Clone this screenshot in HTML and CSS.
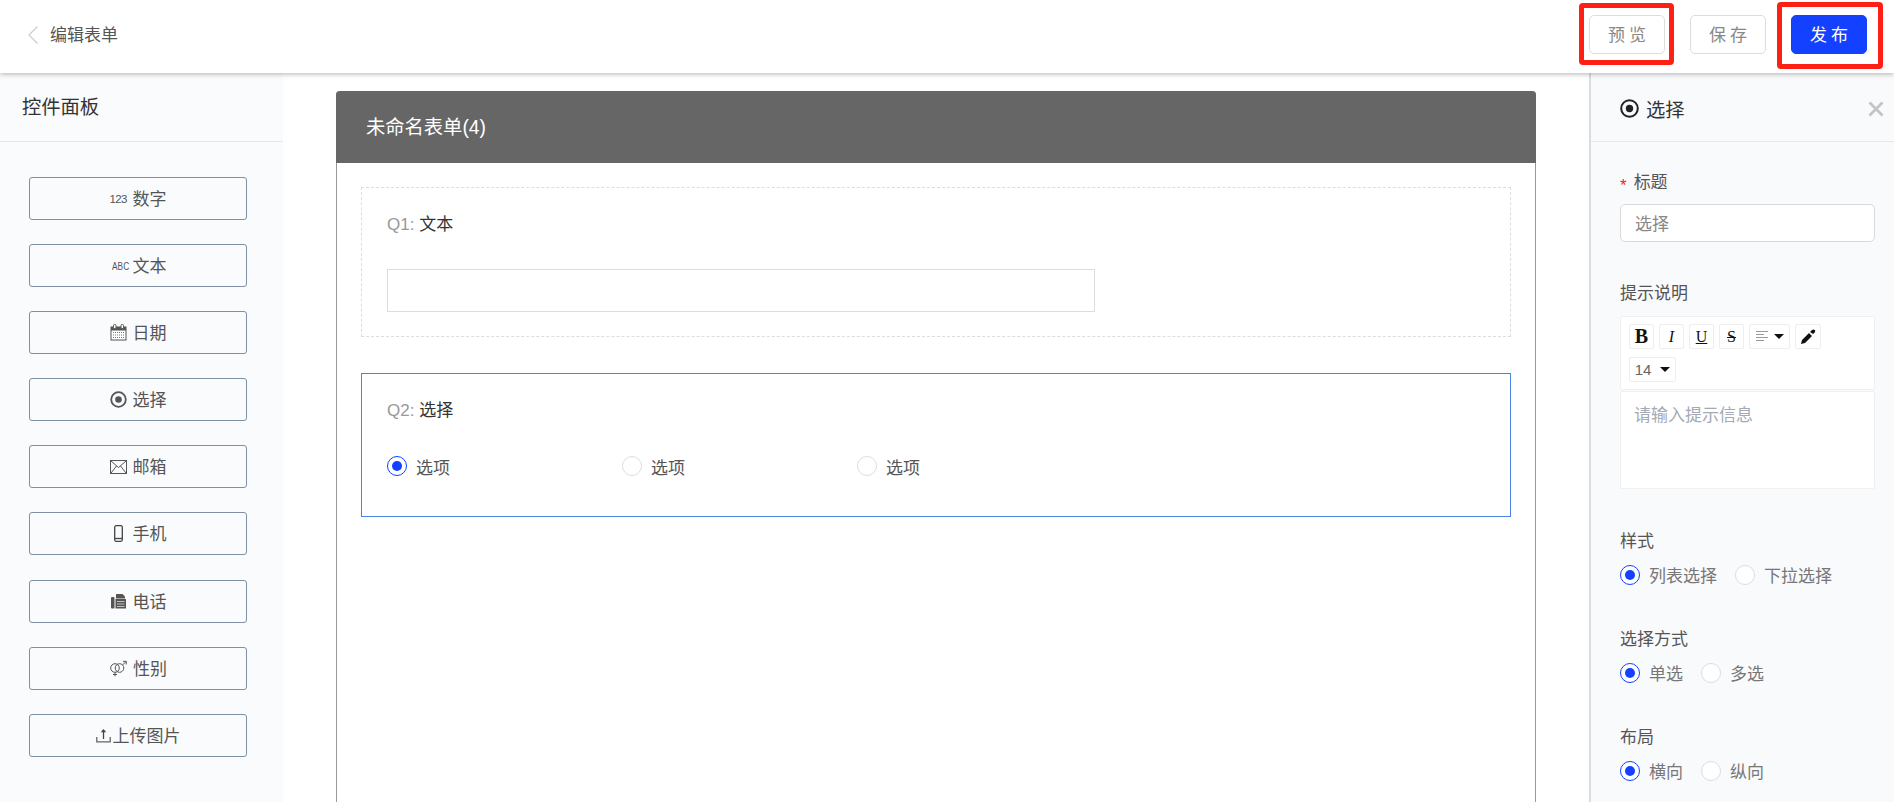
FILE: index.html
```html
<!DOCTYPE html>
<html lang="zh-CN">
<head>
<meta charset="utf-8">
<title>编辑表单</title>
<link rel="stylesheet" href="styles.css">
</head>
<body>
<header class="topbar">
  <div class="back">
    <svg class="back-icon" width="12" height="20" viewBox="0 0 12 20"><path d="M10.500 1.500 2 10l8.500 8.500" fill="none" stroke="#ccc" stroke-width="1.200"/></svg>
    <span>编辑表单</span>
  </div>
  <div class="actions">
    <button class="btn">预览</button>
    <button class="btn">保存</button>
    <button class="btn btn-primary">发布</button>
  </div>
  <div class="mark mark-a"></div>
  <div class="mark mark-b"></div>
</header>
<main class="workspace">
  <aside class="palette">
    <h2 class="panel-title">控件面板</h2>
    <div class="widget-list">
      <div class="widget"><span class="glyph glyph-num">123</span><span class="widget-name">数字</span></div>
      <div class="widget"><span class="glyph glyph-abc">ABC</span><span class="widget-name">文本</span></div>
      <div class="widget">
        <svg class="icon" width="17" height="17" viewBox="0 0 17 17"><rect x="1" y="3" width="15" height="13" fill="#fff" stroke="#555"/><rect x="1" y="3" width="15" height="3.500" fill="#555"/><rect x="3.500" y="0.500" width="2.500" height="4" rx="1" fill="#fff" stroke="#555"/><rect x="11" y="0.500" width="2.500" height="4" rx="1" fill="#fff" stroke="#555"/><path d="M3 8.500h11M3 11h11M3 13.500h11" stroke="#777" stroke-dasharray="1 1"/></svg>
        <span class="widget-name">日期</span>
      </div>
      <div class="widget">
        <svg class="icon" width="17" height="17" viewBox="0 0 17 17"><circle cx="8.500" cy="8.500" r="7.300" fill="none" stroke="#555" stroke-width="1.800"/><circle cx="8.500" cy="8.500" r="3.300" fill="#555"/></svg>
        <span class="widget-name">选择</span>
      </div>
      <div class="widget">
        <svg class="icon" width="17" height="14" viewBox="0 0 17 14"><rect x="0.500" y="0.500" width="16" height="13" fill="none" stroke="#555"/><path d="M1 1l7.500 6.500L16 1M1 13l5.500-7M16 13l-5.500-7" fill="none" stroke="#555"/></svg>
        <span class="widget-name">邮箱</span>
      </div>
      <div class="widget">
        <svg class="icon" width="17" height="17" viewBox="0 0 17 17"><rect x="4.700" y="0.700" width="7.600" height="15.600" rx="1.500" fill="none" stroke="#444" stroke-width="1.300"/><path d="M5 13.500h7" stroke="#444" stroke-width="1.300"/></svg>
        <span class="widget-name">手机</span>
      </div>
      <div class="widget">
        <svg class="icon" width="17" height="16" viewBox="0 0 17 16"><rect x="1" y="4" width="3.500" height="11.500" rx="1" fill="#555"/><path d="M6 1h6.500L15 3.500V5.500H6z" fill="#555"/><rect x="5.500" y="6" width="10.500" height="9.500" fill="#555"/><path d="M7 8.500h7.500M7 11h7.500M7 13.500h7.500" stroke="#ddd" stroke-width=".8"/></svg>
        <span class="widget-name">电话</span>
      </div>
      <div class="widget">
        <svg class="icon" width="18" height="17" viewBox="0 0 18 17"><circle cx="6" cy="8" r="4.300" fill="none" stroke="#555"/><circle cx="10.500" cy="8" r="4.300" fill="none" stroke="#555"/><path d="M6 12.300v4M4 14.500h4M13.500 5l3.500-3.500M14 1.300h3.200v3.200" fill="none" stroke="#555"/></svg>
        <span class="widget-name">性别</span>
      </div>
      <div class="widget widget-tight">
        <svg class="icon" width="15" height="15" viewBox="0 0 15 15"><path d="M.8 9v4.800h13.400V9" fill="none" stroke="#666" stroke-width="1.300"/><path d="M7.500 11V2" stroke="#444" stroke-width="1.300"/><path d="M4.800 4.200 7.500 1l2.700 3.200z" fill="#444"/></svg>
        <span class="widget-name">上传图片</span>
      </div>
    </div>
  </aside>

  <section class="canvas">
    <div class="form-card">
      <div class="form-head">未命名表单(4)</div>
      <div class="form-body">
        <div class="question">
          <div class="q-title"><span class="q-no">Q1:</span> 文本</div>
          <div class="text-field"></div>
        </div>
        <div class="question question-active">
          <div class="q-title"><span class="q-no">Q2:</span> 选择</div>
          <div class="option-row">
            <label class="option"><span class="radio radio-on"></span>选项</label>
            <label class="option"><span class="radio"></span>选项</label>
            <label class="option"><span class="radio"></span>选项</label>
          </div>
        </div>
      </div>
    </div>
  </section>

  <aside class="props">
    <div class="props-head">
      <svg width="19" height="19" viewBox="0 0 19 19"><circle cx="9.500" cy="9.500" r="8.300" fill="none" stroke="#222" stroke-width="2"/><circle cx="9.500" cy="9.500" r="3.700" fill="#222"/></svg>
      <span class="props-title">选择</span>
      <svg class="close" width="16" height="16" viewBox="0 0 16 16"><path d="M1.500 1.500l13 13M14.500 1.500l-13 13" stroke="#c4c4c4" stroke-width="2.800"/></svg>
    </div>
    <div class="props-body">
      <div class="field field-title">
        <div class="field-label"><span class="req">*</span>标题</div>
        <div class="prop-input">选择</div>
      </div>
      <div class="field field-hint">
        <div class="field-label">提示说明</div>
        <div class="editor">
          <div class="toolbar">
            <span class="tool tool-b">B</span>
            <span class="tool tool-i">I</span>
            <span class="tool tool-u">U</span>
            <span class="tool tool-s">S</span>
            <span class="tool tool-wide">
              <svg width="13" height="13" viewBox="0 0 13 13"><path d="M1 1.500h12M1 4.500h8M1 7.500h12M1 10.500h8" stroke="#999"/></svg>
              <i class="caret"></i>
            </span>
            <span class="tool tool-pen">
              <svg width="16" height="16" viewBox="0 0 16 16"><path d="M1 15l1-4 7-7 3 3-7 7zM10 3l2-2c1-.8 2-.8 2.700 0 .7.800.6 1.700 0 2.400L13 5z" fill="#111"/></svg>
            </span>
            <span class="tool tool-size">14<i class="caret"></i></span>
          </div>
          <div class="editor-body">请输入提示信息</div>
        </div>
      </div>
      <div class="field field-radio">
        <div class="field-label">样式</div>
        <div class="prop-radios">
          <label class="prop-option"><span class="radio radio-on"></span>列表选择</label>
          <label class="prop-option"><span class="radio"></span>下拉选择</label>
        </div>
      </div>
      <div class="field field-radio">
        <div class="field-label">选择方式</div>
        <div class="prop-radios">
          <label class="prop-option"><span class="radio radio-on"></span>单选</label>
          <label class="prop-option"><span class="radio"></span>多选</label>
        </div>
      </div>
      <div class="field field-radio">
        <div class="field-label">布局</div>
        <div class="prop-radios">
          <label class="prop-option"><span class="radio radio-on"></span>横向</label>
          <label class="prop-option"><span class="radio"></span>纵向</label>
        </div>
      </div>
    </div>
  </aside>
</main>
</body>
</html>
```

FILE: styles.css
```css
* { box-sizing: border-box; }
html, body { height: 100%; margin: 0; }
body {
  display: flex;
  flex-direction: column;
  height: 802px;
  overflow: hidden;
  background: #fff;
  color: #555;
  font-family: "Liberation Sans", "Noto Sans CJK SC", sans-serif;
  font-size: 17px;
}
.topbar {
  position: relative;
  z-index: 2;
  flex: 0 0 73px;
  display: flex;
  align-items: center;
  justify-content: space-between;
  padding: 0 27px 4px 27px;
  background: #fff;
  box-shadow: 0 1px 5px rgba(0, 0, 0, .3);
}
.back { display: flex; align-items: center; gap: 11px; padding-bottom: 2px; color: #555; }
.back-icon { margin-top: 3px; }
.actions { display: flex; gap: 25px; }
.btn {
  width: 76px;
  height: 39px;
  padding: 0 0 2px 4px;
  border: 1px solid #ddd;
  border-radius: 5px;
  background: #fff;
  color: #888;
  font: inherit;
  letter-spacing: 4px;
}
.btn-primary { border-color: #1440ff; background: #1440ff; color: #fff; }
.mark { position: absolute; border: 5px solid #ff2015; border-radius: 4px; }
.mark-a { left: 1579px; top: 3px; width: 95px; height: 62px; }
.mark-b { left: 1777px; top: 2px; width: 106px; height: 67px; }

.workspace { flex: 1; display: flex; min-height: 0; }

.palette { flex: 0 0 283px; background: #f9fbfd; }
.panel-title {
  height: 69px;
  margin: 0;
  padding: 21px 0 0 22px;
  border-bottom: 1px solid #e4e7ed;
  color: #333;
  font-size: 19.300px;
  font-weight: 400;
  line-height: 28px;
}
.widget-list { display: flex; flex-direction: column; gap: 24.100px; padding: 35px 36px 0 29px; }
.widget {
  display: flex;
  align-items: center;
  justify-content: center;
  gap: 6px;
  height: 43px;
  border: 1px solid #7f8fa4;
  border-radius: 3px;
  color: #555;
}
.widget-tight { gap: 2px; }
.widget-name { margin-bottom: 2px; }
.icon { flex: none; }
.glyph { flex: none; width: 17px; text-align: center; white-space: nowrap; color: #555; }
.glyph-num { font-size: 11.500px; letter-spacing: -.6px; }
.glyph-abc { width: 15px; margin-right: 2px; font-size: 11.500px; transform: scaleX(.72); }

.canvas { flex: 1; min-width: 0; padding: 18px 53px 0; overflow: hidden; }
.form-card {
  width: 1200px;
  height: 800px;
  border: 1px solid #999;
  border-top: 0;
  border-radius: 4px 4px 0 0;
}
.form-head {
  height: 72px;
  margin: 0 -1px;
  padding-left: 30px;
  border-radius: 4px 4px 0 0;
  background: #666;
  color: #fff;
  font-size: 19.300px;
  line-height: 73px;
}
.form-body { display: flex; flex-direction: column; gap: 36px; padding: 24px 24px 0; }
.question { height: 150px; padding: 24px 25px 0; border: 1px dashed #ddd; }
.question-active { height: 144px; border: 1px solid #4a86e0; }
.q-title { height: 26px; color: #333; line-height: 26px; }
.q-no { color: #999; }
.text-field { width: 708px; height: 43px; margin-top: 31px; border: 1px solid #ddd; }
.option-row { display: flex; margin-top: 28px; }
.option { display: flex; align-items: center; gap: 9px; width: 235px; height: 28px; color: #555; }
.radio {
  flex: none;
  position: relative;
  width: 20px;
  height: 20px;
  border: 1px solid #ddd;
  border-radius: 50%;
  background: #fff;
}
.radio-on { border-color: #1440ff; }
.radio-on::after {
  content: "";
  position: absolute;
  inset: 4px;
  border-radius: 50%;
  background: #1440ff;
}

.props { flex: 0 0 305px; border-left: 2px solid #ddd; background: #f9fafc; }
.props-head {
  display: flex;
  align-items: center;
  height: 69px;
  padding: 3px 10px 0 29px;
  border-bottom: 1px solid #e4e7ed;
}
.props-title { margin-left: 7px; color: #333; font-size: 19.300px; }
.close { margin-left: auto; }
.props-body { padding: 27px 19px 0 29px; }
.field-label { height: 28px; color: #555; line-height: 28px; }
.req { position: relative; margin-right: 7px; color: #f5222d; vertical-align: -3px; }
.prop-input {
  height: 38px;
  margin-top: 7px;
  padding-left: 14px;
  border: 1px solid #d9d9d9;
  border-radius: 5px;
  background: #fff;
  color: #888;
  line-height: 40px;
}
.field-hint { margin-top: 38px; }
.editor { margin-top: 8px; }
.toolbar {
  display: flex;
  flex-wrap: wrap;
  align-items: flex-start;
  align-content: flex-start;
  gap: 8px 5px;
  width: 255px;
  height: 74px;
  padding: 7px 8px 0;
  border: 1px solid #f0f0f0;
  border-radius: 2px;
  background: #fff;
}
.tool {
  display: flex;
  align-items: center;
  justify-content: center;
  width: 25px;
  height: 25px;
  border: 1px solid #eee;
  border-radius: 2px;
  background: #fff;
  color: #111;
  font-family: "Liberation Serif", serif;
  font-size: 16px;
}
.tool-b { font-size: 20px; font-weight: 700; }
.tool-i { font-style: italic; }
.tool-u { text-decoration: underline; }
.tool-s { text-decoration: line-through; }
.tool-wide { gap: 6px; width: 41px; }
.tool-pen { width: 26px; }
.tool-size {
  gap: 9px;
  width: 48px;
  margin-right: 190px;
  color: #666;
  font-family: "Liberation Sans", sans-serif;
  font-size: 15px;
}
.caret { width: 0; height: 0; border: 5px solid transparent; border-top-color: #111; border-bottom: 0; }
.editor-body {
  width: 255px;
  height: 98px;
  margin-top: 1px;
  padding: 11px 13px;
  border: 1px solid #f0f0f0;
  border-radius: 2px;
  background: #fff;
  color: #a5a9b3;
  line-height: 26px;
}
.field-radio { margin-top: 37.500px; }
.field-hint + .field-radio { margin-top: 39px; }
.prop-radios { display: flex; gap: 18px; margin-top: 4.500px; }
.prop-option { display: flex; align-items: center; gap: 9px; height: 28px; color: #777; }
```
